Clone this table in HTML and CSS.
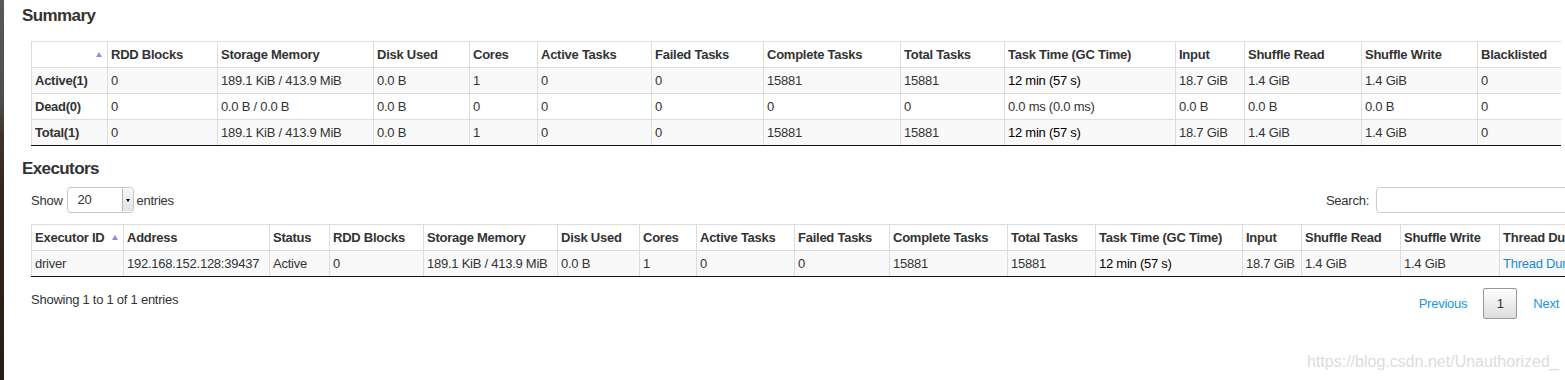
FILE: index.html
```html
<!DOCTYPE html>
<html lang="en">
<head>
<meta charset="utf-8">
<title>Executors</title>
<link rel="stylesheet" href="styles.css">
</head>
<body>
<div class="frame">
  <div class="edge"></div>
  <main class="page">
    <h4 class="title">Summary</h4>
    <div class="indent summary-block">
      <table class="grid summary">
        <colgroup>
          <col><col><col><col><col><col><col><col><col><col><col><col><col><col>
        </colgroup>
        <thead>
          <tr>
            <th><span class="sort-asc"></span></th>
            <th>RDD Blocks</th>
            <th>Storage Memory</th>
            <th>Disk Used</th>
            <th>Cores</th>
            <th>Active Tasks</th>
            <th>Failed Tasks</th>
            <th>Complete Tasks</th>
            <th>Total Tasks</th>
            <th>Task Time (GC Time)</th>
            <th>Input</th>
            <th>Shuffle Read</th>
            <th>Shuffle Write</th>
            <th>Blacklisted</th>
          </tr>
        </thead>
        <tbody>
          <tr>
            <td class="label">Active(1)</td>
            <td>0</td>
            <td>189.1 KiB / 413.9 MiB</td>
            <td>0.0 B</td>
            <td>1</td>
            <td>0</td>
            <td>0</td>
            <td>15881</td>
            <td>15881</td>
            <td class="gc">12 min (57 s)</td>
            <td>18.7 GiB</td>
            <td>1.4 GiB</td>
            <td>1.4 GiB</td>
            <td>0</td>
          </tr>
          <tr>
            <td class="label">Dead(0)</td>
            <td>0</td>
            <td>0.0 B / 0.0 B</td>
            <td>0.0 B</td>
            <td>0</td>
            <td>0</td>
            <td>0</td>
            <td>0</td>
            <td>0</td>
            <td>0.0 ms (0.0 ms)</td>
            <td>0.0 B</td>
            <td>0.0 B</td>
            <td>0.0 B</td>
            <td>0</td>
          </tr>
          <tr>
            <td class="label">Total(1)</td>
            <td>0</td>
            <td>189.1 KiB / 413.9 MiB</td>
            <td>0.0 B</td>
            <td>1</td>
            <td>0</td>
            <td>0</td>
            <td>15881</td>
            <td>15881</td>
            <td class="gc">12 min (57 s)</td>
            <td>18.7 GiB</td>
            <td>1.4 GiB</td>
            <td>1.4 GiB</td>
            <td>0</td>
          </tr>
        </tbody>
      </table>
    </div>

    <h4 class="title">Executors</h4>
    <div class="indent dt">
      <div class="dt-controls">
        <div class="dt-length">
          <span>Show</span>
          <span class="select"><span class="select-value">20</span><span class="select-arrow"></span></span>
          <span>entries</span>
        </div>
        <label class="dt-filter">
          <span>Search:</span>
          <input class="search-input" type="text">
        </label>
      </div>

      <table class="grid executors">
        <colgroup>
          <col><col><col><col><col><col><col><col><col><col><col><col><col><col><col><col>
        </colgroup>
        <thead>
          <tr>
            <th><span class="sort-asc"></span>Executor ID</th>
            <th>Address</th>
            <th>Status</th>
            <th>RDD Blocks</th>
            <th>Storage Memory</th>
            <th>Disk Used</th>
            <th>Cores</th>
            <th>Active Tasks</th>
            <th>Failed Tasks</th>
            <th>Complete Tasks</th>
            <th>Total Tasks</th>
            <th>Task Time (GC Time)</th>
            <th>Input</th>
            <th>Shuffle Read</th>
            <th>Shuffle Write</th>
            <th>Thread Dump</th>
          </tr>
        </thead>
        <tbody>
          <tr>
            <td>driver</td>
            <td>192.168.152.128:39437</td>
            <td>Active</td>
            <td>0</td>
            <td>189.1 KiB / 413.9 MiB</td>
            <td>0.0 B</td>
            <td>1</td>
            <td>0</td>
            <td>0</td>
            <td>15881</td>
            <td>15881</td>
            <td class="gc">12 min (57 s)</td>
            <td>18.7 GiB</td>
            <td>1.4 GiB</td>
            <td>1.4 GiB</td>
            <td><a class="link" href="#">Thread Dump</a></td>
          </tr>
        </tbody>
      </table>

      <div class="dt-footer">
        <div class="dt-info">Showing 1 to 1 of 1 entries</div>
        <div class="pager">
          <a class="page-btn" href="#">Previous</a>
          <a class="page-btn current" href="#">1</a>
          <a class="page-btn" href="#">Next</a>
        </div>
      </div>
    </div>
  </main>
</div>
<div class="watermark">https://blog.csdn.net/Unauthorized_</div>
</body>
</html>
```

FILE: styles.css
```css
html, body {
  margin: 0;
  padding: 0;
  height: 100%;
  overflow: hidden;
  background: #fff;
}

body {
  font-family: "Liberation Sans", Arial, Helvetica, sans-serif;
  font-size: 13px;
  line-height: 17px;
  letter-spacing: -0.25px;
  color: #333;
}

.frame {
  display: flex;
  min-height: 380px;
}

.edge {
  flex: 0 0 4px;
  background: linear-gradient(to bottom, #585858 0%, #4e4e4e 26%, #3f3429 36%, #33281e 50%, #241c16 100%);
}

.page {
  flex: 1;
  min-width: 0;
  padding: 6px 0 0 18px;
}

.title {
  margin: 0;
  font-size: 17px;
  line-height: 20px;
  letter-spacing: -0.6px;
  font-weight: bold;
  color: #333;
}

.indent {
  margin-left: 9px;
}

.summary-block {
  margin-top: 15px;
  margin-bottom: 13px;
}

/* tables */
table.grid {
  border-collapse: separate;
  border-spacing: 0;
  table-layout: fixed;
  border-bottom: 1px solid #111;
}

.grid th,
.grid td {
  box-sizing: border-box;
  height: 26px;
  padding: 4px 3px;
  border-top: 1px solid #ddd;
  border-left: 1px solid #ddd;
  text-align: left;
  vertical-align: top;
  white-space: nowrap;
  overflow: hidden;
}

.grid th {
  font-weight: bold;
  background: #fff;
}

.grid tbody tr:nth-child(odd) td {
  background: #f9f9f9;
}

.grid td.label {
  font-weight: bold;
}

.grid td.gc {
  color: #000;
}

.sort-asc {
  float: right;
  width: 0;
  height: 0;
  margin-top: 6px;
  margin-right: 2px;
  border-left: 3.5px solid transparent;
  border-right: 3.5px solid transparent;
  border-bottom: 5px solid #8d8ddb;
}

.summary { width: 1530px; }
.summary col:nth-child(1) { width: 76px; }
.summary col:nth-child(2) { width: 110px; }
.summary col:nth-child(3) { width: 156px; }
.summary col:nth-child(4) { width: 96px; }
.summary col:nth-child(5) { width: 68px; }
.summary col:nth-child(6) { width: 114px; }
.summary col:nth-child(7) { width: 112px; }
.summary col:nth-child(8) { width: 137px; }
.summary col:nth-child(9) { width: 104px; }
.summary col:nth-child(10) { width: 171px; }
.summary col:nth-child(11) { width: 69px; }
.summary col:nth-child(12) { width: 117px; }
.summary col:nth-child(13) { width: 116px; }
.summary col:nth-child(14) { width: 84px; }

.executors { width: 1568px; }
.executors col:nth-child(1) { width: 92px; }
.executors col:nth-child(2) { width: 146px; }
.executors col:nth-child(3) { width: 60px; }
.executors col:nth-child(4) { width: 94px; }
.executors col:nth-child(5) { width: 134px; }
.executors col:nth-child(6) { width: 82px; }
.executors col:nth-child(7) { width: 57px; }
.executors col:nth-child(8) { width: 98px; }
.executors col:nth-child(9) { width: 95px; }
.executors col:nth-child(10) { width: 118px; }
.executors col:nth-child(11) { width: 88px; }
.executors col:nth-child(12) { width: 147px; }
.executors col:nth-child(13) { width: 59px; }
.executors col:nth-child(14) { width: 99px; }
.executors col:nth-child(15) { width: 99px; }
.executors col:nth-child(16) { width: 100px; }

.link {
  color: #1a8ad4;
  text-decoration: none;
}

/* datatable wrapper */
.dt {
  width: 1542px;
}

.dt-controls {
  display: flex;
  justify-content: space-between;
  align-items: center;
  margin-top: 8px;
  margin-bottom: 11px;
}

.dt-length {
  display: flex;
  align-items: center;
  gap: 3px;
}

.select {
  display: inline-flex;
  box-sizing: border-box;
  width: 67px;
  height: 26px;
  margin-left: 1px;
  border: 1px solid #c6c6c6;
  border-radius: 4px;
  background: #fff;
}

.select-value {
  flex: 1;
  padding-left: 10px;
  line-height: 24px;
}

.select-arrow {
  display: flex;
  align-items: center;
  justify-content: center;
  width: 10px;
  margin: 1px 0;
  border-left: 1px solid #b5b5b5;
  border-radius: 0 3px 3px 0;
  background: linear-gradient(to bottom, #f6f6f6, #e3e3e3);
}

.select-arrow::after {
  content: "";
  width: 0;
  height: 0;
  border-left: 2.5px solid transparent;
  border-right: 2.5px solid transparent;
  border-top: 3px solid #000;
}

.dt-filter {
  display: flex;
  align-items: center;
  gap: 7px;
}

.search-input {
  box-sizing: border-box;
  width: 197px;
  height: 26px;
  margin: 0;
  border: 1px solid #ccc;
  border-radius: 4px;
  background: #fff;
  font: inherit;
}

.dt-footer {
  display: flex;
  justify-content: space-between;
  align-items: flex-start;
  margin-top: 11px;
}

.dt-info {
  padding-top: 3px;
}

.pager {
  display: flex;
}

.page-btn {
  margin-left: 2px;
  padding: 6.5px 13px;
  line-height: 16px;
  border: 1px solid transparent;
  border-radius: 2px;
  color: #2196dc;
  text-decoration: none;
}

.page-btn.current {
  padding: 6.5px 12.5px;
  border-color: #979797;
  background: linear-gradient(to bottom, #fff 0%, #dcdcdc 100%);
  color: #333;
}

.watermark {
  position: absolute;
  left: 1307px;
  top: 353px;
  font-size: 16px;
  line-height: 18px;
  letter-spacing: 0;
  color: #dcdcdc;
  white-space: nowrap;
}
```
